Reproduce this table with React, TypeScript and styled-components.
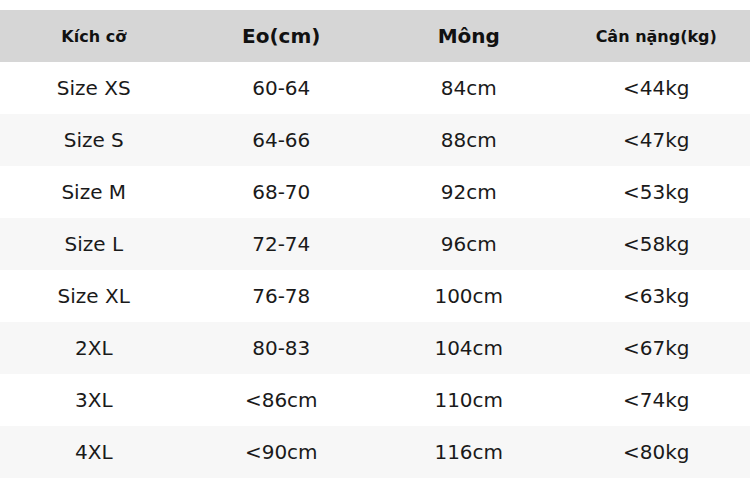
import * as React from 'react';
import styled, { createGlobalStyle } from 'styled-components';

const GlobalStyle = createGlobalStyle`
  html, body {
    margin: 0;
    padding: 0;
    background: #ffffff;
  }
  body {
    font-family: 'DejaVu Sans', 'Noto Sans', sans-serif;
    color: #111111;
  }
`;

const Root = styled.div`
  width: 750px;
  height: 478px;
  padding-top: 10px;
  box-sizing: border-box;
  background: #ffffff;
`;

const Table = styled.div`
  display: grid;
  grid-template-columns: repeat(4, 1fr);
`;

const HeadCell = styled.div<{ $big?: boolean }>`
  height: 52px;
  display: flex;
  align-items: center;
  justify-content: center;
  background: #d6d6d6;
  font-weight: bold;
  font-size: ${(p) => (p.$big ? '20px' : '16px')};
  color: #111111;
`;

const Cell = styled.div<{ $shade: boolean }>`
  height: 52px;
  display: flex;
  align-items: center;
  justify-content: center;
  background: ${(p) => (p.$shade ? '#f7f7f7' : '#ffffff')};
  font-size: 20px;
  color: #1a1a1a;
`;

const headers: [string, boolean][] = [
  ['Kích cỡ', false],
  ['Eo(cm)', true],
  ['Mông', true],
  ['Cân nặng(kg)', false],
];

const rows = [
  ['Size XS', '60-64', '84cm', '<44kg'],
  ['Size S', '64-66', '88cm', '<47kg'],
  ['Size M', '68-70', '92cm', '<53kg'],
  ['Size L', '72-74', '96cm', '<58kg'],
  ['Size XL', '76-78', '100cm', '<63kg'],
  ['2XL', '80-83', '104cm', '<67kg'],
  ['3XL', '<86cm', '110cm', '<74kg'],
  ['4XL', '<90cm', '116cm', '<80kg'],
];

export default function App() {
  return (
    <Root>
      <GlobalStyle />
      <Table>
        {headers.map(([label, big]) => (
          <HeadCell key={label} $big={big}>
            {label}
          </HeadCell>
        ))}
        {rows.map((row, i) =>
          row.map((value, j) => (
            <Cell key={`${i}-${j}`} $shade={i % 2 === 1}>
              {value}
            </Cell>
          ))
        )}
      </Table>
    </Root>
  );
}
